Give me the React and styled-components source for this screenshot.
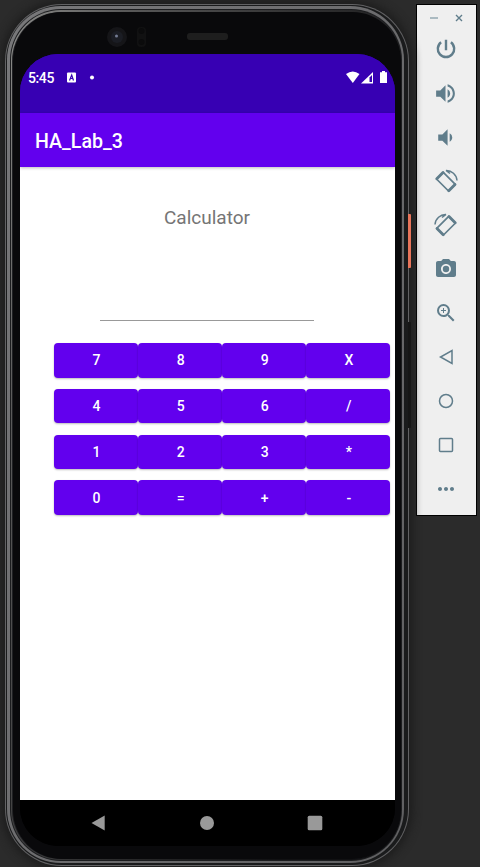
import React from "react";
import styled, { createGlobalStyle } from "styled-components";
import {
  MdVolumeUp, MdVolumeDown, MdCameraAlt, MdZoomIn, MdMoreHoriz,
} from "react-icons/md";

const Global = createGlobalStyle`
  * { box-sizing: border-box; }
  body { margin: 0; background: #2b2b2b; font-family: Roboto, sans-serif; overflow: hidden; }
`;

const Desktop = styled.main`
  display: flex;
  align-items: flex-start;
  width: 480px;
  height: 867px;
  padding: 4px 0 0 5px;
  background: #2b2b2b;
  overflow: hidden;
`;

const Phone = styled.div`
  position: relative;
  flex: none;
  width: 404px;
  height: 862px;
  padding: 1px;
  border-radius: 57px;
  background: #626264;
  box-shadow: 0 0 9px 4px #1e1e1e;
`;

const Ring = styled.div`
  height: 100%;
  padding: ${(p) => p.$pad};
  border-radius: ${(p) => p.$radius}px;
  background: ${(p) => p.$color};
`;

const Face = styled.div`
  display: flex;
  flex-direction: column;
  height: 100%;
  border-radius: 49px;
  background: #09090b;
  padding-left: 7px;
`;

const Bezel = styled.div`
  flex: none;
  height: 42px;
`;

const Sensors = styled.svg`
  display: block;
`;

const Screen = styled.section`
  display: flex;
  flex-direction: column;
  flex: none;
  width: 375px;
  height: 792px;
  border-radius: 38px;
  overflow: hidden;
  background: linear-gradient(#3700b3 50%, #000 50%);
`;

const StatusBar = styled.header`
  display: flex;
  flex: none;
  height: 59px;
  padding: 15px 7px 0 8px;
  background: #3700b3;
  color: #fff;
  font-size: 14px;
  letter-spacing: -0.4px;
  font-weight: 500;
  line-height: 18px;
`;

const StatusIcons = styled.svg`
  margin-left: ${(p) => (p.$end ? "auto" : "12px")};
`;

const TitleBar = styled.h1`
  flex: none;
  margin: 0;
  height: 54px;
  padding: 0 15px;
  background: #6200ee;
  color: #fff;
  font-size: 19.6px;
  font-weight: 500;
  line-height: 57px;
  box-shadow: 0 1px 3px #0004;
  position: relative;
`;

const Content = styled.div`
  flex: 1;
  padding: 39px 4px 0 34px;
  background: #fff;
`;

const Heading = styled.h2`
  margin: 0 0 0 -31px;
  color: #757575;
  font-size: 19px;
  font-weight: 400;
  line-height: 24px;
  text-align: center;
`;

const Entry = styled.div`
  width: 214px;
  height: 91px;
  margin-left: 46px;
  border-bottom: 1px solid #999;
`;

const Keypad = styled.div`
  display: grid;
  grid-template-columns: repeat(4, 84.1px);
  grid-auto-rows: 34.5px;
  row-gap: 11.3px;
  margin-top: 22px;
`;

const Key = styled.button`
  border: 0;
  padding: 0 0 0 1px;
  border-radius: 4px;
  background: #6200ee;
  box-shadow: 0 1px 2px #0004;
  color: #fff;
  font: 500 14px Roboto, sans-serif;
`;

const NavBar = styled.nav`
  display: flex;
  flex: none;
  align-items: center;
  justify-content: center;
  gap: 92px;
  height: 46px;
  padding-right: 1px;
  background: #000;
`;

const NavIcon = styled.svg`
  width: 16px;
  height: 16px;
  fill: #999;
`;

const SideButton = styled.i`
  position: absolute;
  left: 403px;
  top: ${(p) => p.$top}px;
  width: 3px;
  height: ${(p) => p.$height}px;
  border-radius: 0 1px 1px 0;
  background: ${(p) => p.$color};
`;

const Toolbar = styled.aside`
  flex: none;
  width: 61px;
  height: 512px;
  margin-left: 7px;
  border: 1px solid #000;
  background: #efefef;
  color: #607d8b;
`;

const WindowControls = styled.div`
  display: flex;
  justify-content: center;
  gap: 15px;
  height: 22px;
  padding-top: 8px;
`;

const Tool = styled.button`
  display: flex;
  align-items: center;
  justify-content: center;
  width: 100%;
  height: 44px;
  padding: 0 2px 0 0;
  border: 0;
  background: transparent;
  color: #607d8b;
  svg { display: block; transform: ${(p) => (p.$flip ? "scaleX(-1)" : "none")}; }
`;

const keys = ["7", "8", "9", "X", "4", "5", "6", "/", "1", "2", "3", "*", "0", "=", "+", "-"];

const Outline = ({ children }) => (
  <svg width="18" height="18" viewBox="0 0 18 18" fill="none" stroke="currentColor" strokeWidth="1.5">
    {children}
  </svg>
);

const PowerIcon = () => (
  <svg width="24" height="24" viewBox="0 0 24 24" fill="none" stroke="currentColor" strokeWidth="2.4">
    <path d="M12 2.700v10.500M7.100 5.300a8.200 8.200 0 1 0 9.800 0" />
  </svg>
);

const RotateIcon = () => (
  <svg width="24" height="24" viewBox="0 0 24 24" fill="none" stroke="currentColor">
    <path d="M9.300 3.300 21.300 15.300 14.500 22 2.500 10Z" strokeWidth="1.700" strokeLinejoin="round" />
    <path d="M2.800 9.700 9 3.500M14.800 21.700 21 15.500" strokeWidth="2.800" strokeLinecap="round" />
    <path d="M12 1.500c5.500-.3 10.700 4.300 11 10M12 1.300l4 3.200" strokeWidth="1.500" />
  </svg>
);

const tools = [
  { name: "Power", icon: <PowerIcon /> },
  { name: "Volume up", icon: <MdVolumeUp size={25} /> },
  { name: "Volume down", icon: <MdVolumeDown size={25} /> },
  { name: "Rotate left", icon: <RotateIcon />, flip: false },
  { name: "Rotate right", icon: <RotateIcon />, flip: true },
  { name: "Screenshot", icon: <MdCameraAlt size={24} /> },
  { name: "Zoom", icon: <MdZoomIn size={24} /> },
  { name: "Back", icon: <Outline><path d="M15 2.500v13L3.500 9Z" /></Outline> },
  { name: "Home", icon: <Outline><circle cx="9" cy="9" r="6.500" /></Outline> },
  { name: "Overview", icon: <Outline><rect x="2.500" y="2.500" width="13" height="13" rx="1" /></Outline> },
  { name: "More", icon: <MdMoreHoriz size={24} /> },
];

export default function App() {
  return (
    <>
      <Global />
      <Desktop>
        <Phone>
          <Ring $color="#1a1b1c" $pad="1px 4px 2px 1px" $radius={56}>
            <Ring $color="linear-gradient(110deg, #78787a, #606062)" $pad="3px 2px 2px 3px" $radius={54}>
              <Ring $color="#1c1d1f" $pad="1px" $radius={51}>
                <Ring $color="linear-gradient(105deg, #8c8c8a 0, #5a5a5a 18%, #303031 48%, #101012 80%)" $pad="2px 0 1px 1px" $radius={50}>
                  <Ring $color="#202124" $pad="0 0 0 1px" $radius={49}>
                    <Face>
                      <Bezel>
                        <Sensors width="375" height="42" viewBox="20 12 375 42">
                          <circle cx="117" cy="37" r="10" fill="#151518" />
                          <circle cx="117" cy="37" r="6" fill="#1b1d24" />
                          <circle cx="116.500" cy="36" r="1.500" fill="#747c93" />
                          <rect x="137" y="27" width="9" height="20" rx="4" fill="#111112" />
                          <circle cx="141.500" cy="31" r="3" fill="#0b0b0c" />
                          <circle cx="141.500" cy="42" r="3" fill="#0b0b0c" />
                          <rect x="187" y="33" width="41" height="7" rx="3" fill="#1e1e1e" />
                        </Sensors>
                      </Bezel>
                      <Screen>
                        <StatusBar>
                          5:45
                          <StatusIcons width="30" height="18" viewBox="0 0 30 18">
                            <rect x="1" y="3.500" width="9" height="10" rx="1" fill="#fff" />
                            <path d="M3.500 11.500 5.700 6 7.500 11.500M4.200 9.500h2.600" fill="none" stroke="#3700b3" strokeWidth="1.200" />
                            <circle cx="26" cy="8.500" r="2" fill="#fff" />
                          </StatusIcons>
                          <StatusIcons $end width="42" height="18" viewBox="346 69 42 18">
                            <path d="M346 74q6.700-5 13.500 0L352.800 83Z" fill="#fff" />
                            <path d="M361 83.500 373 72v11.500Z" fill="#fff" />
                            <path d="M369.500 77.500 372 75v7h-2.500Z" fill="#3700b3" />
                            <path d="M382 71h3v1.300h2V83h-7V72.300h2Z" fill="#fff" />
                          </StatusIcons>
                        </StatusBar>
                        <TitleBar>HA_Lab_3</TitleBar>
                        <Content>
                          <Heading>Calculator</Heading>
                          <Entry />
                          <Keypad>
                            {keys.map((k) => <Key key={k}>{k}</Key>)}
                          </Keypad>
                        </Content>
                        <NavBar>
                          <NavIcon viewBox="0 0 16 16"><path d="M13.700 .5v15L.5 8Z" /></NavIcon>
                          <NavIcon viewBox="0 0 16 16"><circle cx="8" cy="8" r="7" /></NavIcon>
                          <NavIcon viewBox="0 0 16 16"><rect x=".7" y=".7" width="14.600" height="14.600" rx="1.500" /></NavIcon>
                        </NavBar>
                      </Screen>
                    </Face>
                  </Ring>
                </Ring>
              </Ring>
            </Ring>
          </Ring>
          <SideButton $top={210} $height={54} $color="#e8745a" />
          <SideButton $top={318} $height={106} $color="#161616" />
        </Phone>
        <Toolbar>
          <WindowControls>
            <svg width="10" height="10" viewBox="0 0 10 10"><path d="M1 5h8" stroke="#9aacb5" strokeWidth="1.600" /></svg>
            <svg width="10" height="10" viewBox="0 0 10 10"><path d="m2 2 6 6M8 2 2 8" stroke="#607d8b" strokeWidth="1.400" /></svg>
          </WindowControls>
          {tools.map((t) => <Tool key={t.name} $flip={t.flip} aria-label={t.name}>{t.icon}</Tool>)}
        </Toolbar>
      </Desktop>
    </>
  );
}
